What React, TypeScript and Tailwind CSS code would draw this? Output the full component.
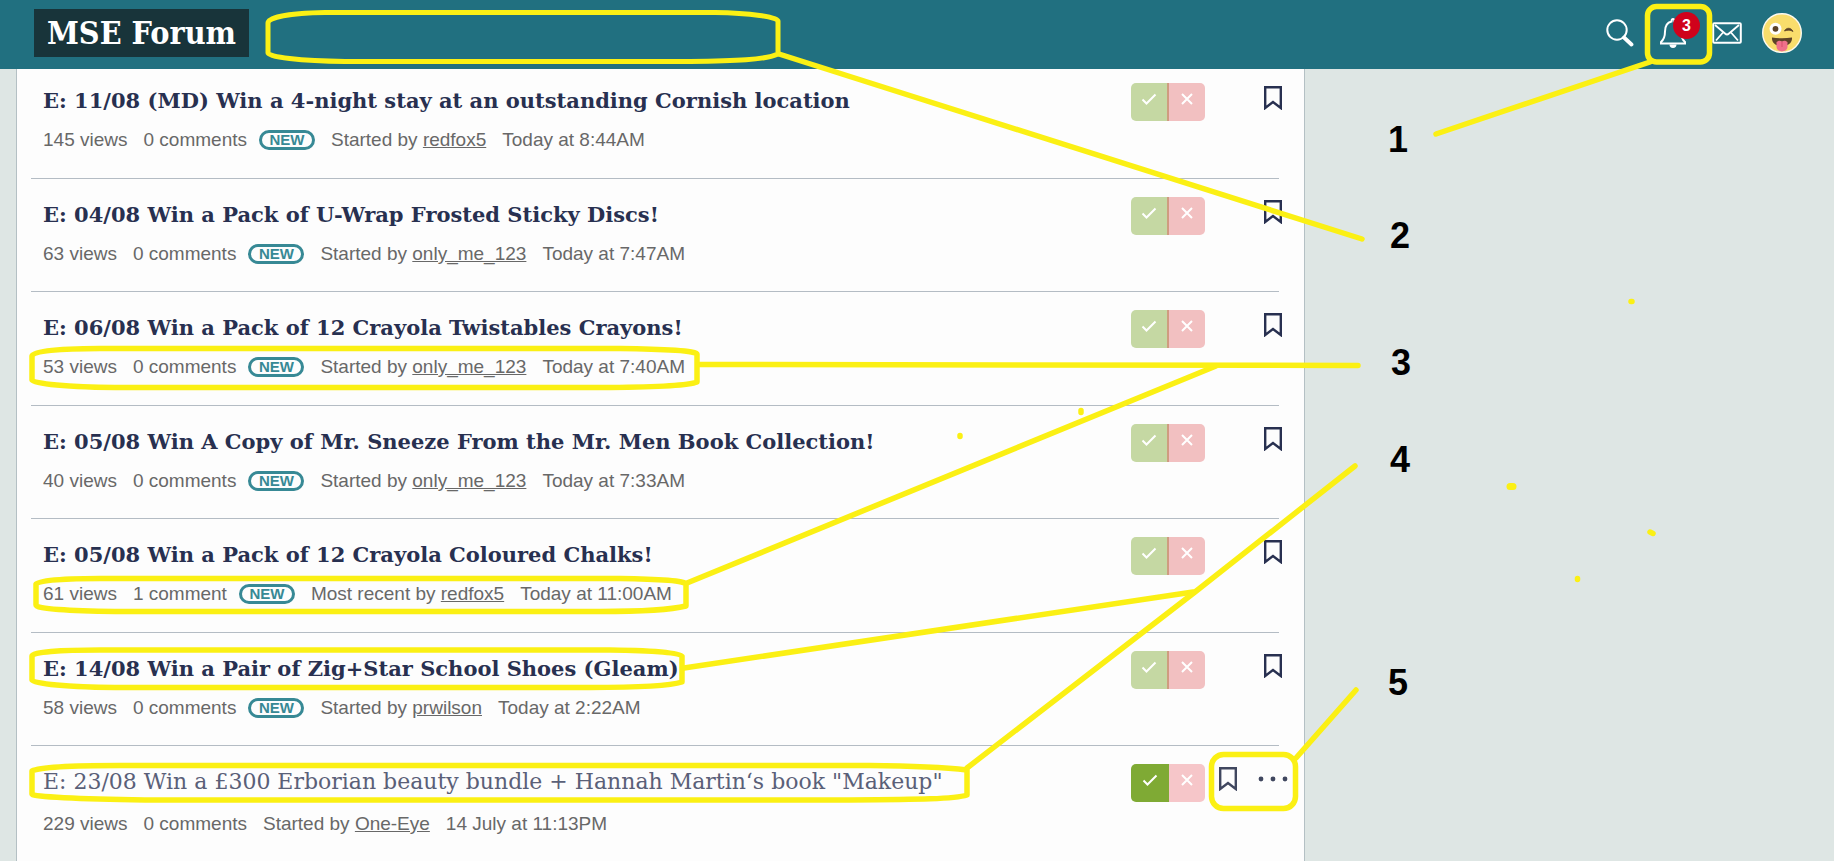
import React from 'react';
import clsx from 'clsx';

interface Thread {
  title: string;
  views: string;
  comments: string;
  isNew: boolean;
  label: string;
  user: string;
  date: string;
  read?: boolean;
}

const threads: Thread[] = [
  { title: 'E: 11/08 (MD) Win a 4-night stay at an outstanding Cornish location', views: '145 views', comments: '0 comments', isNew: true, label: 'Started by', user: 'redfox5', date: 'Today at 8:44AM' },
  { title: 'E: 04/08 Win a Pack of U-Wrap Frosted Sticky Discs!', views: '63 views', comments: '0 comments', isNew: true, label: 'Started by', user: 'only_me_123', date: 'Today at 7:47AM' },
  { title: 'E: 06/08 Win a Pack of 12 Crayola Twistables Crayons!', views: '53 views', comments: '0 comments', isNew: true, label: 'Started by', user: 'only_me_123', date: 'Today at 7:40AM' },
  { title: 'E: 05/08 Win A Copy of Mr. Sneeze From the Mr. Men Book Collection!', views: '40 views', comments: '0 comments', isNew: true, label: 'Started by', user: 'only_me_123', date: 'Today at 7:33AM' },
  { title: 'E: 05/08 Win a Pack of 12 Crayola Coloured Chalks!', views: '61 views', comments: '1 comment', isNew: true, label: 'Most recent by', user: 'redfox5', date: 'Today at 11:00AM' },
  { title: 'E: 14/08 Win a Pair of Zig+Star School Shoes (Gleam)', views: '58 views', comments: '0 comments', isNew: true, label: 'Started by', user: 'prwilson', date: 'Today at 2:22AM' },
  { title: 'E: 23/08 Win a £300 Erborian beauty bundle + Hannah Martin‘s book "Makeup"', views: '229 views', comments: '0 comments', isNew: false, label: 'Started by', user: 'One-Eye', date: '14 July at 11:13PM', read: true },
];

const SearchIcon = () => (
  <svg viewBox="0 0 28 28" className="h-7 w-7" fill="none" stroke="white">
    <circle cx="11" cy="11" r="9.7" strokeWidth="2" />
    <path d="M18 18.500L25.500 25.500" strokeWidth="3.800" strokeLinecap="round" />
  </svg>
);

const BellIcon = () => (
  <svg viewBox="0 0 28 32" className="h-8 w-7" fill="none" stroke="white" strokeWidth="2">
    <path d="M2 26.500V25C5 22.500 6 20 6 14.500C6 9 8.500 5.500 12.500 4.500C12.500 2.500 13 2 14 2S15.500 2.500 15.500 4.500C19.500 5.500 22 9 22 14.500C22 20 23 22.500 26 25V26.500Z" />
    <path d="M10.500 27.500A3.500 3.500 0 0 0 17.500 27.500Z" fill="white" stroke="none" />
  </svg>
);

const MailIcon = () => (
  <svg viewBox="0 0 30 22" className="h-[22px] w-[30px]" fill="none" stroke="white">
    <rect x="1.200" y="1.200" width="27.600" height="19.600" rx="1" strokeWidth="2" />
    <path d="M3 3L13 11.500Q15 13.500 17 11.500L27 3M4 18.500L11 10.500M26 18.500L19 10.500" strokeWidth="1.800" />
  </svg>
);

const AvatarIcon = () => (
  <svg viewBox="0 0 40 40" className="h-10 w-10">
    <circle cx="20" cy="20" r="19.300" fill="#f9dd6c" stroke="#fdfaf0" strokeWidth="1.400" />
    <circle cx="13.500" cy="15.800" r="6" fill="#fff" />
    <circle cx="13.500" cy="15.800" r="2.900" fill="#5d4327" />
    <path d="M22.500 18C24 14.500 29 14 31 18.500C28.500 16.800 25.500 16.800 22.500 18Z" fill="#5d4327" stroke="#5d4327" strokeWidth="0.800" />
    <path d="M10 24.500Q20 26 30 24.500C30.500 29.500 26 33.500 20 33.500S9.500 29.500 10 24.500Z" fill="#5d4327" />
    <path d="M14.500 29C17 27 18.500 27.500 20 28.500C21.500 27.500 23 27 25.500 29V33.500C25.500 40 14.500 40 14.500 33.500Z" fill="#f0708a" />
    <path d="M20 29V34" stroke="#d84c6c" strokeWidth="1" />
  </svg>
);

const BookmarkIcon = () => (
  <svg viewBox="0 0 18 24" className="h-6 w-[18px]" fill="none" stroke="currentColor" strokeWidth="2.400">
    <path d="M1.200 1.200H16.800V22L9 16L1.200 22Z" />
  </svg>
);

const DotsIcon = () => (
  <svg viewBox="0 0 30 6" className="h-[6px] w-[30px]" fill="currentColor">
    <circle cx="3" cy="3" r="2.400" />
    <circle cx="15" cy="3" r="2.400" />
    <circle cx="27" cy="3" r="2.400" />
  </svg>
);

const Header = () => (
  <header className="relative z-10 flex h-[69px] shrink-0 items-start justify-between bg-[#217080] pl-[34px] pr-8">
    <a
      href="#"
      className="mt-[9px] flex h-12 w-[215px] items-center justify-center bg-[#18343a] font-['DejaVu_Serif_Condensed','DejaVu_Serif',serif] text-[32px] font-bold leading-8 text-white"
    >
      MSE Forum
    </a>
    <nav className="mt-[13px] flex h-10 items-center gap-5">
      <div className="flex items-center gap-[25px]">
        <button type="button" aria-label="Search"><SearchIcon /></button>
        <button type="button" aria-label="Notifications" className="relative">
          <BellIcon />
          <span className="absolute -right-[13px] -top-[5px] flex h-[27px] w-[27px] items-center justify-center rounded-full bg-[#d0021b] text-base font-bold text-white">
            3
          </span>
        </button>
        <button type="button" aria-label="Messages"><MailIcon /></button>
      </div>
      <button type="button" aria-label="Profile"><AvatarIcon /></button>
    </nav>
  </header>
);

const Votes = ({ read }: { read?: boolean }) => (
  <div className="flex h-[38px] w-[74px] overflow-hidden rounded-[5px] text-white">
    <button
      type="button"
      aria-label="Mark as entered"
      className={clsx('flex w-[38px] justify-center pt-[9px]', read ? 'bg-[#7faa34]' : 'border-r-2 border-[#cf9c80] bg-[#c5d8a3]')}
    >
      <svg viewBox="0 0 16 14" className="h-[14px] w-4" fill="none" stroke="currentColor" strokeWidth="2">
        <path d="M1.500 7.500L5.500 11.500L14.500 2.500" />
      </svg>
    </button>
    <button
      type="button"
      aria-label="Mark as not interested"
      className={clsx('flex w-9 justify-center pt-[9px]', read ? 'bg-[#f6c6c9]' : 'bg-[#f2c0c1]')}
    >
      <svg viewBox="0 0 14 14" className="h-[14px] w-[14px]" fill="none" stroke="currentColor" strokeWidth="2">
        <path d="M2 2L12 12M12 2L2 12" />
      </svg>
    </button>
  </div>
);

const ThreadRow = ({ thread }: { thread: Thread }) => (
  <li className="ml-[14px] mr-[25px] flex h-[114px] items-start border-b border-[#b4bcc4] pl-3 pt-[18px] even:h-[113px] last:border-b-0">
    <div className="min-w-0 flex-1">
      <h2
        className={clsx(
          "font-['DejaVu_Serif',serif] leading-9",
          thread.read ? 'text-[22px] font-normal text-[#5a6078]' : 'text-[21px] font-bold text-[#283050]'
        )}
      >
        <a href="#">{thread.title}</a>
      </h2>
      <div className={clsx('flex items-center text-[19px] leading-6 text-[#686868]', thread.read ? 'mt-3' : 'mt-[9px]')}>
        <span className="mr-4">{thread.views}</span>
        <span className={thread.isNew ? 'mr-3' : 'mr-4'}>{thread.comments}</span>
        {thread.isNew && (
          <span className="mr-4 flex h-5 w-14 items-center justify-center rounded-[10px] border-[3px] border-[#378995] text-[15px] font-bold text-[#378995]">
            NEW
          </span>
        )}
        <span className="mr-4">
          {thread.label} <a href="#" className="underline">{thread.user}</a>
        </span>
        <time>{thread.date}</time>
      </div>
    </div>
    <Votes read={thread.read} />
    <div className={clsx('-mr-[9px] flex w-[83px] items-start pt-[3px]', thread.read ? 'justify-between pl-[14px] text-[#40475f]' : 'justify-end pr-[6px] text-[#283050]')}>
      <button type="button" aria-label="Bookmark"><BookmarkIcon /></button>
      {thread.read && (
        <button type="button" aria-label="More options" className="mt-[9px]"><DotsIcon /></button>
      )}
    </div>
  </li>
);

const notes = [
  { text: '1', place: 'left-[1388px] top-[122px]' },
  { text: '2', place: 'left-[1390px] top-[218px]' },
  { text: '3', place: 'left-[1391px] top-[345px]' },
  { text: '4', place: 'left-[1390px] top-[442px]' },
  { text: '5', place: 'left-[1388px] top-[665px]' },
];

// Hand drawn marker strokes and the numbers they point at
const Annotations = () => (
  <div className="pointer-events-none absolute inset-0 z-20">
    <svg className="absolute left-0 top-0 h-full w-full" fill="none" stroke="#fbf014" strokeWidth="5.500" strokeLinecap="round" strokeLinejoin="round">
      <path d="M268 23C268 17 290 13 325 12.500H715C750 13 778 17 778 21V54C765 60 735 61 690 61.500H345C300 61 268 57 268 53Z" strokeWidth="5" />
      <path d="M779 54L1362 239" />
      <rect x="1647.500" y="6.500" width="62" height="55.500" rx="9" />
      <path d="M1650 62L1436 134" />
      <path d="M32 356C32 351 60 348.500 100 348.500H620C665 349 697 351 697 354V382C690 385 660 387 610 387.500H115C70 387 32 384 32 380Z" />
      <path d="M698 364.500L1027 365L1358 365.500" />
      <path d="M36 584C36 580 70 578.500 100 578.500H620C660 579 686 581 686 584V606C670 610 640 611.500 600 611.500H115C70 611 36 609 36 605Z" />
      <path d="M687 583L1216 366" />
      <path d="M32 656C32 652 60 650 100 650H610C655 650.500 682 653 682 656V682C670 686 640 687.500 590 687.500H115C70 687 32 684 32 680Z" />
      <path d="M684 668L1193 592" />
      <path d="M32 771C40 767 75 765.500 120 765.500H870C920 766 950 768 967 770V795C955 799 920 799.500 850 800H145C80 799 32 797 32 794Z" />
      <path d="M967 768L1195 592L1355 466" />
      <rect x="1211.500" y="754.500" width="84" height="54" rx="12" />
      <path d="M1296 758L1356 690" />
      <path d="M960 435.500V436.500M1081 410.500V412.500" />
      <path d="M1631 301.500H1632M1577.500 578.500V579.500M1650 532L1653 533.500" />
      <path d="M1510 486.500H1513" strokeWidth="7" />
    </svg>
    {notes.map((note) => (
      <span key={note.text} className={clsx('absolute text-4xl font-bold leading-9 text-black', note.place)}>
        {note.text}
      </span>
    ))}
  </div>
);

export default function App() {
  return (
    <div className="relative flex min-h-screen flex-col overflow-hidden bg-[#dee6e4] font-['Liberation_Sans',Arial,sans-serif]">
      <Header />
      <main className="-mt-1 grid flex-1 grid-cols-[1289fr_529fr] pl-4">
        <ul className="border-x border-[#b4c0c4] bg-[#fdfdfd]">
          {threads.map((thread) => (
            <ThreadRow key={thread.title} thread={thread} />
          ))}
        </ul>
      </main>
      <Annotations />
    </div>
  );
}
